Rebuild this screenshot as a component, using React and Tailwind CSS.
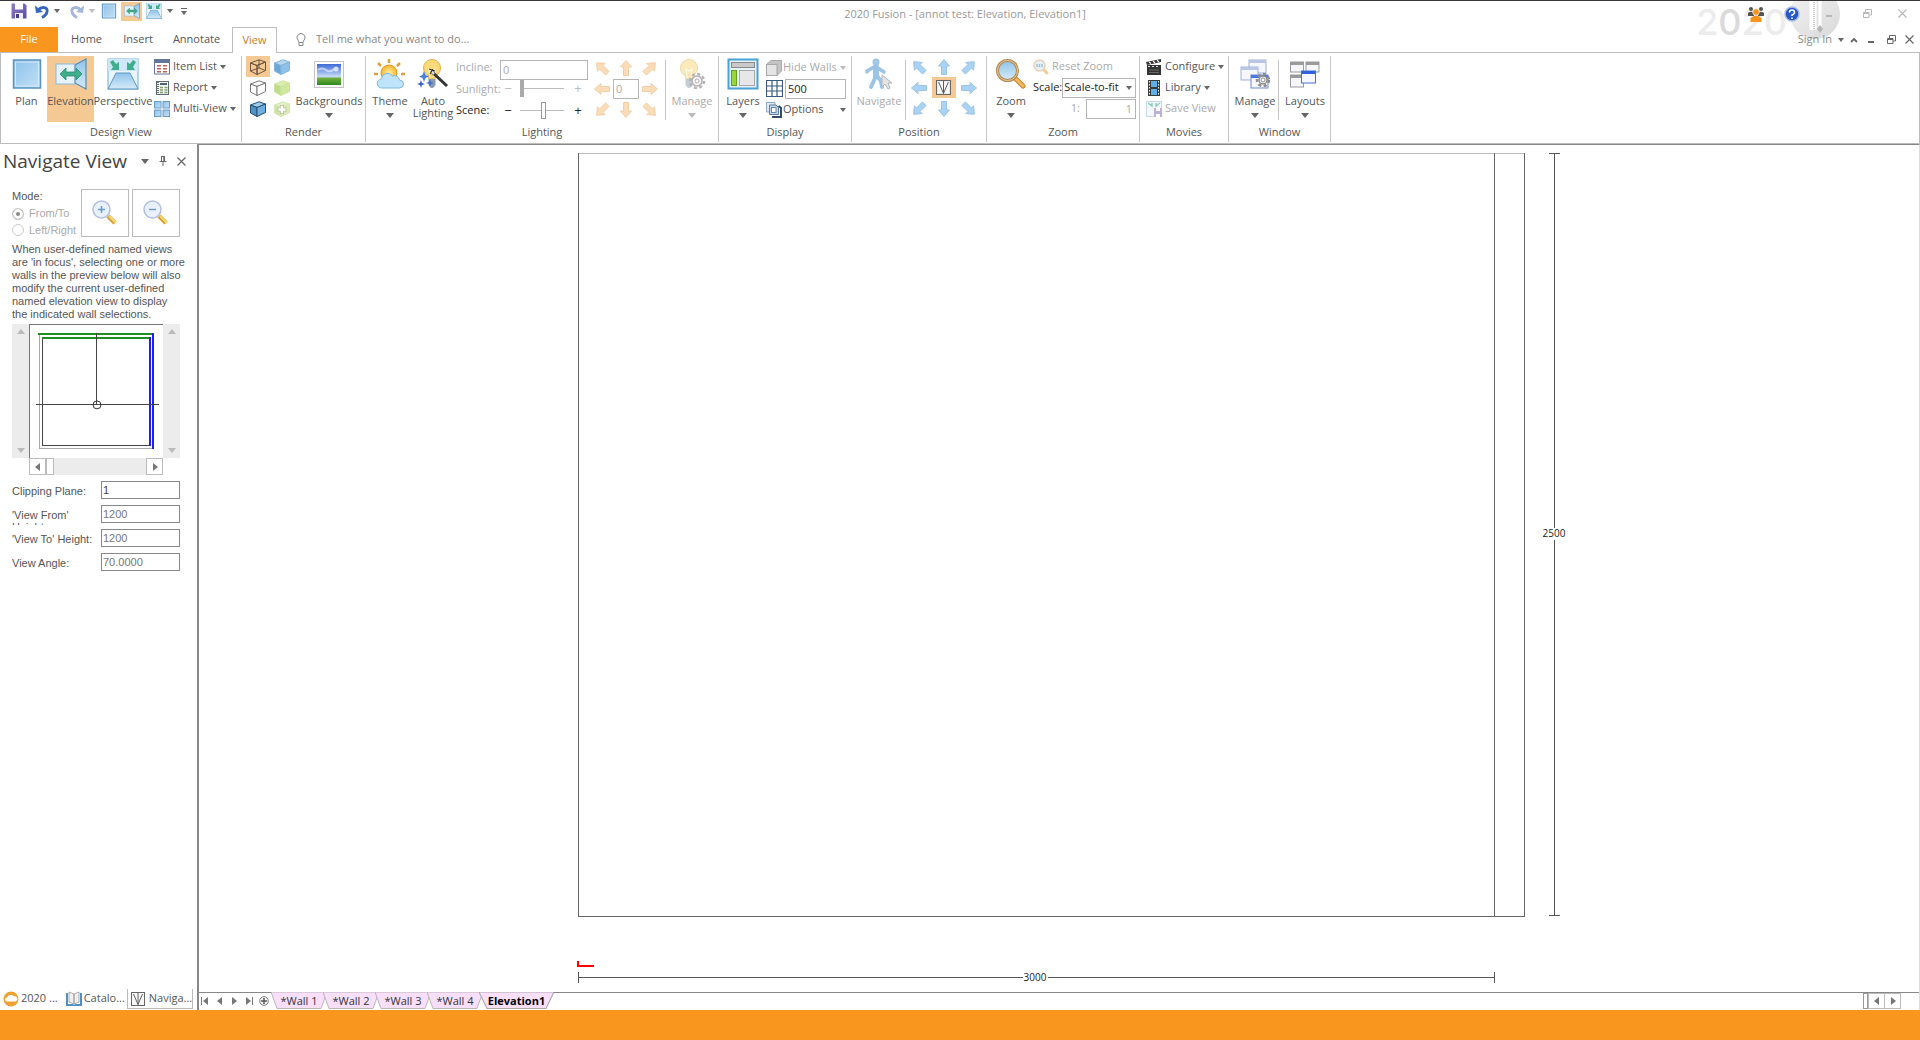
import React from 'react';

/* ---------- small glyphs ---------- */

function Caret({ className = 'text-[#666]' }) {
  return (
    <svg viewBox="0 0 6 4" className={`h-1 w-1.5 shrink-0 ${className}`} fill="currentColor">
      <path d="M0 0H6L3 4Z" />
    </svg>
  );
}

function BigCaret({ className = 'text-[#666]' }) {
  return (
    <svg viewBox="0 0 8 5" className={`h-[5px] w-2 shrink-0 ${className}`} fill="currentColor">
      <path d="M0 0H8L4 5Z" />
    </svg>
  );
}

function Tri({ angle, className = 'size-2 text-[#777]' }) {
  return (
    <svg viewBox="0 0 8 8" className={className} fill="currentColor">
      <path d="M0 6H8L4 1Z" transform={`rotate(${angle} 4 4)`} />
    </svg>
  );
}

function Arrow({ angle, fill = '#a9d3f2', stroke = '#8dbbe0' }) {
  return (
    <svg viewBox="0 0 16 16" className="size-4">
      <path
        d="M8 .5L13.500 7H10.500V15.500H5.500V7H2.500Z"
        fill={fill}
        stroke={stroke}
        strokeWidth=".8"
        strokeLinejoin="round"
        transform={`rotate(${angle} 8 8)`}
      />
    </svg>
  );
}

function Gradients() {
  return (
    <svg className="absolute size-0" aria-hidden="true">
      <defs>
        <linearGradient id="sky" x1="0" y1="0" x2="0" y2="1">
          <stop offset="0" stopColor="#8fc3ea" />
          <stop offset="1" stopColor="#d6ebf9" />
        </linearGradient>
        <linearGradient id="skyDiag" x1="0" y1="0" x2="1" y2="1">
          <stop offset="0" stopColor="#8cc1ea" />
          <stop offset="1" stopColor="#c4e1f6" />
        </linearGradient>
        <linearGradient id="photo" x1="0" y1="0" x2="0" y2="1">
          <stop offset="0" stopColor="#3d68d6" />
          <stop offset=".6" stopColor="#c5dcf8" />
          <stop offset=".68" stopColor="#6fae3c" />
          <stop offset="1" stopColor="#2f8a1f" />
        </linearGradient>
        <radialGradient id="sun">
          <stop offset="0" stopColor="#fff0a8" />
          <stop offset="1" stopColor="#f7b52c" />
        </radialGradient>
        <linearGradient id="purple" x1="0" y1="0" x2="1" y2="1">
          <stop offset="0" stopColor="#8f7fc6" />
          <stop offset="1" stopColor="#5b4b9e" />
        </linearGradient>
        <linearGradient id="disc" x1="0" y1="0" x2="1" y2="1">
          <stop offset="0" stopColor="#f3f3f3" />
          <stop offset="1" stopColor="#d8d8d8" />
        </linearGradient>
      </defs>
    </svg>
  );
}

/* ---------- view icons ---------- */

function PlanIcon({ className, line = '#5a93be' }) {
  return (
    <svg viewBox="0 0 32 32" className={className}>
      <rect x="2.500" y="2" width="27" height="28" fill="url(#skyDiag)" stroke={line} strokeWidth="1.500" />
      <rect x="4.500" y="4" width="23" height="24" fill="none" stroke="#d4eafa" />
    </svg>
  );
}

function ElevationIcon({ className }) {
  return (
    <svg viewBox="0 0 32 32" className={className}>
      <rect x="1" y="6" width="20" height="20" fill="#e6f3fc" stroke="#8ab9dc" />
      <path d="M20 7L31 1V31L20 25Z" fill="url(#sky)" stroke="#4f8fc0" strokeWidth="1.200" />
      <path d="M5 16L11 10V14H21V10L27 16L21 22V18H11V22Z" fill="#3fae8c" stroke="#2a8d6e" strokeWidth=".8" />
    </svg>
  );
}

function PerspectiveIcon({ className }) {
  return (
    <svg viewBox="0 0 32 32" className={className}>
      <rect x="1" y="1" width="30" height="30" fill="#eaf5fd" stroke="#6fadd8" />
      <path d="M1 1H31V13H1Z" fill="#cfe7f9" />
      <path d="M9 15H23L31 31H1Z" fill="url(#sky)" stroke="#5f96c0" />
      <path d="M3 4L6 2L9 6L12 4V12H4L6 9Z" fill="#3fae8c" />
      <path d="M29 4L26 2L23 6L20 4V12H28L26 9Z" fill="#3fae8c" />
    </svg>
  );
}

function ItemListIcon() {
  return (
    <svg viewBox="0 0 16 16" className="size-4 shrink-0">
      <rect x=".5" y="1" width="15" height="14" fill="#fff" stroke="#66799a" />
      <rect x="0" y="0" width="16" height="4" fill="#62779c" />
      <path d="M3 6h4v1.5H3zM9 6h4v1.5H9zM3 9h4v1.5H3zM9 9h4v1.5H9zM3 12h4v1.5H3zM9 12h4v1.5H9z" fill="#b9654f" />
    </svg>
  );
}

function ReportIcon() {
  return (
    <svg viewBox="0 0 16 16" className="size-4 shrink-0">
      <rect x="2.500" y="1.500" width="12" height="13" fill="#f6f8f4" stroke="#5d6a72" />
      <path d="M4 2v12" stroke="#3c474d" strokeWidth="1.500" strokeDasharray="1 1" />
      <rect x="6" y="3" width="7" height="2" fill="#4d6270" />
      <path d="M6 7.500h3M6 10h3M6 12.500h3M10.500 7.500h3M10.500 10h3M10.500 12.500h3" stroke="#7fa06e" strokeWidth="1.300" />
    </svg>
  );
}

function MultiViewIcon() {
  return (
    <svg viewBox="0 0 16 16" className="size-4 shrink-0">
      <g fill="url(#skyDiag)" stroke="#6c9cc2">
        <rect x=".5" y=".5" width="6.500" height="6.500" />
        <rect x="9" y=".5" width="6.500" height="6.500" />
        <rect x=".5" y="9" width="6.500" height="6.500" />
        <rect x="9" y="9" width="6.500" height="6.500" />
      </g>
    </svg>
  );
}

/* ---------- render icons ---------- */

function Cube({ top, left, right, line, wire, plus }) {
  return (
    <svg viewBox="0 0 18 16" className="h-4 w-[18px]">
      <g stroke={line} strokeWidth="1" strokeLinejoin="round">
        <path d="M1.500 4L10 .8L16.500 3L8 6.500Z" fill={top} />
        <path d="M1.500 4L8 6.500V15.500L1.500 12Z" fill={left} />
        <path d="M8 6.500L16.500 3V11.500L8 15.500Z" fill={right} />
        {wire && <path d="M10 .8V9L1.500 12M10 9L16.500 11.500" fill="none" />}
      </g>
      {plus && <path d="M9 4V13M4.500 8.500H13.500" stroke="#b4bf9a" strokeWidth="4" />}
      {plus && <path d="M9 4.800V12.200M5.300 8.500H12.700" stroke="#fff" strokeWidth="2.500" />}
    </svg>
  );
}

const cubes = [
  { name: 'Wireframe', top: 'none', left: 'none', right: 'none', line: '#6b5540', wire: true, active: true },
  { name: 'Shaded', top: '#b5d8f2', left: '#6ba6d8', right: '#8fc0e8', line: '#82b4dc' },
  { name: 'Hidden line', top: '#fff', left: '#fff', right: '#fff', line: '#777' },
  { name: 'Textured', top: '#dcefb0', left: '#bedd84', right: '#cfe89c', line: '#cfe3a4' },
  { name: 'Outlined', top: '#9fcbec', left: '#4f91c6', right: '#6faede', line: '#27506f' },
  { name: 'Advanced', top: '#e2f0c4', left: '#cde6a4', right: '#d8ecb4', line: '#d3e6b4', plus: true },
];

function BackgroundsIcon() {
  return (
    <svg viewBox="0 0 32 30" className="h-[30px] w-8">
      <rect x="1.500" y="2.500" width="29" height="26" fill="#fdfdfd" stroke="#c4c4c4" />
      <rect x="4" y="5" width="24" height="21" fill="url(#photo)" />
      <path d="M5 11q4-3 8 0t8-1" stroke="#dfeaff" strokeWidth="2" fill="none" opacity=".7" />
      <circle cx="23" cy="10" r="2.500" fill="#fff" opacity=".7" />
    </svg>
  );
}

/* ---------- lighting icons ---------- */

function ThemeIcon() {
  return (
    <svg viewBox="0 0 32 30" className="h-[30px] w-8">
      <g stroke="#e0a040" strokeWidth="2.500">
        <path d="M15 0V4M4 4L7 7M26 4L23 7M0 15H4M27 15H31" />
      </g>
      <circle cx="15" cy="14" r="8" fill="url(#sun)" stroke="#e29a24" />
      <path
        d="M8 29a4.500 4.500 0 01-.5-9 6 6 0 0111-3 5 5 0 017 4 4 4 0 010 8Z"
        fill="#bfe3f8"
        stroke="#7fb9de"
      />
    </svg>
  );
}

function Bulb({ faded }) {
  return (
    <g opacity={faded ? 0.5 : 1}>
      <circle cx="13" cy="9" r="8.500" fill="#fbd978" stroke="#e5b04a" />
      <path d="M9 16H17L16 20H10Z" fill="#fbd978" stroke="#e5b04a" />
      <path d="M11 18L10 10L13 12L16 10L15 18" fill="none" stroke="#fff6d8" strokeWidth="1.200" />
      <path d="M9.500 20H16.500V26L14 29H12L9.500 26Z" fill="#8b9bb0" />
    </g>
  );
}

function AutoLightingIcon() {
  return (
    <svg viewBox="0 0 32 30" className="h-[30px] w-8">
      <g transform="translate(2 0)"><Bulb /></g>
      <path d="M14 12L30 27" stroke="#333" strokeWidth="3" />
      <path d="M14 12L17 15" stroke="#e4e4e4" strokeWidth="2" />
      <path d="M12 10L18 12M13 15L16 10" stroke="#222" strokeWidth="1" />
      <path d="M7 12L8.500 16L12 17.500L8.500 19L7 23L5.500 19L2 17.500L5.500 16Z" fill="#4a7fd8" />
      <path d="M4 21L5 24L8 25L5 26L4 29L3 26L0 25L3 24Z" fill="#2f5fc4" />
      <path d="M13 20L14 23L17 24L14 25L13 28L12 25L9 24L12 23Z" fill="#3f70d0" />
    </svg>
  );
}

function Gear({ cx, cy, color, r = 5 }) {
  return (
    <g>
      <circle cx={cx} cy={cy} r={r + 2} fill="none" stroke={color} strokeWidth="2.500" strokeDasharray="3 2.500" />
      <circle cx={cx} cy={cy} r={r} fill="#f4f4f4" stroke={color} strokeWidth="1.500" />
      <circle cx={cx} cy={cy} r="2" fill="#fff" stroke={color} />
    </g>
  );
}

function LightManageIcon() {
  return (
    <svg viewBox="0 0 32 30" className="h-[30px] w-8">
      <Bulb faded />
      <Gear cx={21} cy={22} color="#b3b3b3" />
    </svg>
  );
}

/* ---------- display, position, zoom icons ---------- */

function LayersIcon() {
  return (
    <svg viewBox="0 0 32 32" className="size-8">
      <rect x="1.500" y="1.500" width="29" height="29" fill="#e6f2fa" stroke="#4ba3d4" strokeWidth="2" />
      <rect x="4.500" y="4.500" width="23" height="5" fill="#c9c9c9" stroke="#8a8a8a" />
      <rect x="4.500" y="12.500" width="5" height="15" fill="#96d83c" stroke="#5fa01c" />
      <rect x="12.500" y="12.500" width="15" height="15" fill="#e7e7ea" stroke="#a9a9a9" />
    </svg>
  );
}

function HideWallsIcon() {
  return (
    <svg viewBox="0 0 16 16" className="size-4 shrink-0">
      <path d="M5 .5H15.500V11L11 15.500V4.500H.5Z" fill="#c4c4c4" stroke="#a8a8a8" />
      <rect x=".5" y="4.500" width="10.500" height="11" fill="#e4e4e4" stroke="#a8a8a8" />
    </svg>
  );
}

function GridIcon() {
  return (
    <svg viewBox="0 0 17 17" className="size-[17px] shrink-0">
      <path d="M.5.5H16.500V16.500H.5ZM6 0V17M11 0V17M0 6H17M0 11H17" fill="#fff" stroke="#3d5a80" strokeWidth="1.200" />
    </svg>
  );
}

function OptionsIcon() {
  return (
    <svg viewBox="0 0 16 16" className="size-4 shrink-0">
      <path d="M.5.5H9V10H.5Z" fill="#dfe9f3" stroke="#8fa6bf" />
      <path d="M3.500 3H10L12.500 5.500V12.500H3.500Z" fill="#c3d6ea" stroke="#5d7a9c" />
      <path d="M6 15H15V6L12.500 4" fill="none" stroke="#2f4c70" strokeWidth="2" />
      <rect x="5.500" y="5.500" width="4.500" height="5" fill="#fff" stroke="#6d87a5" />
    </svg>
  );
}

function NavigateIcon() {
  return (
    <svg viewBox="0 0 30 32" className="h-8 w-[30px]">
      <g fill="none" stroke="#9cc4e4" strokeLinecap="round" strokeLinejoin="round">
        <circle cx="12" cy="4" r="2.500" fill="#a9cdea" strokeWidth="2" />
        <path d="M12 9V18" strokeWidth="6" />
        <path d="M10 9L3 13V14M14 10L20 14" strokeWidth="3.500" />
        <path d="M12 18L7 29M13 18L17 23L18 29" strokeWidth="4" />
      </g>
      <path d="M18 17V29L21 26L24 31L26 30L24 25H28Z" fill="#e4e4e4" stroke="#b5b5b5" />
    </svg>
  );
}

function CompassIcon({ className = 'size-[15px]' }) {
  return (
    <svg viewBox="0 0 14 14" className={className}>
      <rect x=".5" y=".5" width="13" height="13" fill="#f7f7f7" stroke="#666" />
      <path d="M7 1V12.500M2.500 2L7 12.500L11.500 2" fill="none" stroke="#555" strokeWidth=".9" />
    </svg>
  );
}

function ZoomIcon() {
  return (
    <svg viewBox="0 0 32 32" className="size-8">
      <path d="M19 19L28 28" stroke="#c8842c" strokeWidth="5" strokeLinecap="round" />
      <path d="M20 20L28 28" stroke="#f4b860" strokeWidth="3" strokeLinecap="round" />
      <circle cx="12.500" cy="12.500" r="10" fill="url(#sky)" stroke="#b08850" strokeWidth="3" />
      <circle cx="12.500" cy="12.500" r="10" fill="none" stroke="#e8cfa0" strokeWidth="1" />
    </svg>
  );
}

function ResetZoomIcon() {
  return (
    <svg viewBox="0 0 16 16" className="size-4 shrink-0" opacity=".65">
      <path d="M10 10L14 14" stroke="#f0b060" strokeWidth="3" strokeLinecap="round" />
      <circle cx="6.500" cy="6.500" r="5.500" fill="#d6e9f7" stroke="#e0be8c" strokeWidth="1.500" />
      <path d="M4 5V8M6.500 5V8M9 5V8" stroke="#5f9ac8" strokeWidth="1.300" />
    </svg>
  );
}

function PanelZoomIcon({ minus }) {
  return (
    <svg viewBox="0 0 28 28" className="size-7">
      <path d="M17 17L24 24" stroke="#d6a032" strokeWidth="4.500" />
      <path d="M18 17L25 24" stroke="#f8da74" strokeWidth="2" />
      <circle cx="10.500" cy="10.500" r="8.500" fill="#e9f2fc" stroke="#b3bfe0" strokeWidth="1.500" />
      <path d={minus ? 'M7 10.500H14' : 'M7 10.500H14M10.500 7V14'} stroke="#6d9cc8" strokeWidth="1.500" />
    </svg>
  );
}

/* ---------- movies and window icons ---------- */

function ClapperIcon() {
  return (
    <svg viewBox="0 0 16 16" className="size-4 shrink-0">
      <rect x="1" y="6" width="14" height="10" fill="#333" />
      <path d="M0 3L15 0V3L1 6Z" fill="#333" />
      <path d="M3 3L5 4.500M7 2L9 3.700M11 1.300L13 3" stroke="#fff" strokeWidth="1.200" />
      <path d="M2 7.500H14" stroke="#ddd" strokeWidth="1" strokeDasharray="2 2" />
      <path d="M3 11H13M3 13.500H13" stroke="#777" strokeWidth=".8" />
    </svg>
  );
}

function FilmIcon() {
  return (
    <svg viewBox="0 0 16 16" className="size-4 shrink-0">
      <rect x="2" y="0" width="12" height="16" fill="#3b3b3b" />
      <rect x="5" y="1" width="6" height="6" fill="#5db0ea" />
      <rect x="5" y="9" width="6" height="6" fill="#5db0ea" />
      <path d="M3.500 1V16M12.500 1V16" stroke="#fff" strokeWidth="1" strokeDasharray="1.500 1.500" />
    </svg>
  );
}

function SaveViewIcon() {
  return (
    <svg viewBox="0 0 16 16" className="size-4 shrink-0" opacity=".6">
      <rect x=".5" y=".5" width="15" height="15" fill="#eaf4fb" stroke="#9cc3de" />
      <path d="M2 2L6 5V2M14 2L10 5V2" stroke="#3fae8c" strokeWidth="1.500" fill="none" />
      <rect x="8" y="7" width="8" height="9" fill="#8f7fc6" />
      <path d="M10 7H14V10H10ZM10 13H14V16H10Z" fill="#fff" />
    </svg>
  );
}

function MiniWindow({ x, y, w, h, bar, line }) {
  return (
    <g>
      <rect x={x} y={y} width={w} height={h} fill="#f5f7fc" stroke={line} />
      <rect x={x} y={y} width={w} height="3" fill={bar} />
    </g>
  );
}

function WindowManageIcon() {
  return (
    <svg viewBox="0 0 32 32" className="size-8">
      <MiniWindow x={10} y={2} w={17} h={13} bar="#b9c6e4" line="#9fb0d4" />
      <MiniWindow x={2} y={9} w={17} h={13} bar="#b9c6e4" line="#9fb0d4" />
      <MiniWindow x={12} y={17} w={17} h={13} bar="#4a7ae0" line="#6c8cd4" />
      <Gear cx={24} cy={22} color="#8d8d8d" r={4} />
    </svg>
  );
}

function LayoutsIcon() {
  return (
    <svg viewBox="0 0 32 32" className="size-8">
      <MiniWindow x={1.5} y={4} w={13} h={10} bar="#9a9a9a" line="#9a9a9a" />
      <MiniWindow x={17} y={4} w={13} h={10} bar="#9a9a9a" line="#9a9a9a" />
      <MiniWindow x={1.5} y={17} w={13} h={12} bar="#9a9a9a" line="#9a9a9a" />
      <MiniWindow x={12.5} y={13} w={14} h={12} bar="#2f62dc" line="#4a72cc" />
    </svg>
  );
}

/* ---------- title bar icons ---------- */

function SaveIcon() {
  return (
    <svg viewBox="0 0 16 16" className="size-4">
      <path d="M.5.5H13.500L15.500 2.500V15.500H.5Z" fill="url(#purple)" />
      <rect x="4" y="0" width="8" height="6.500" fill="#fff" />
      <rect x="4" y="10" width="8" height="6" fill="#efeefa" />
      <rect x="5" y="11" width="3" height="4" fill="#4a3a86" />
    </svg>
  );
}

function UndoIcon({ flip }) {
  return (
    <svg viewBox="0 0 14 15" className="h-[15px] w-3.5">
      <g transform={flip ? 'translate(14 0) scale(-1 1)' : undefined}>
        <path d="M3 6C7 2 13 3 12 8C11.500 11 9 12.500 7 13.500" fill="none" stroke={flip ? '#a4b6dc' : '#3565bd'} strokeWidth="2.800" />
        <path d="M0 1.500L1 9L8 8Z" fill={flip ? '#a4b6dc' : '#3565bd'} />
      </g>
    </svg>
  );
}

function PeopleIcon() {
  return (
    <svg viewBox="0 0 16 16" className="size-4">
      <g fill="#555">
        <circle cx="3" cy="3" r="2" />
        <circle cx="13" cy="3" r="2" />
        <path d="M0 10V7Q3 4.500 6 7V10ZM10 10V7Q13 4.500 16 7V10Z" />
      </g>
      <circle cx="8" cy="6" r="3.300" fill="#f7941d" stroke="#fff" strokeWidth=".6" />
      <path d="M2.500 16V12Q8 7 13.500 12V16Z" fill="#f7941d" />
    </svg>
  );
}

function HelpIcon() {
  return (
    <svg viewBox="0 0 16 16" className="size-4">
      <circle cx="8" cy="8" r="7" fill="#2558c8" stroke="#a9bde4" strokeWidth="1.500" />
      <path d="M5.500 6.500Q5.500 4 8 4T10.500 6.500Q10.500 8 8 9V10M8 11.500V13" fill="none" stroke="#fff" strokeWidth="1.600" />
    </svg>
  );
}

function RestoreIcon() {
  return (
    <svg viewBox="0 0 9 9" className="size-[9px]" fill="none" stroke="currentColor">
      <path d="M.5 3.500H6V8.500H.5ZM2.500 3V.5H8.500V6H6.500M.5 4.500H6" />
    </svg>
  );
}

function CloseIcon() {
  return (
    <svg viewBox="0 0 9 9" className="size-[9px]" fill="none" stroke="currentColor" strokeWidth="1.200">
      <path d="M.5.5L8.500 8.500M8.500.5L.5 8.500" />
    </svg>
  );
}

function MinimizeIcon() {
  return (
    <svg viewBox="0 0 8 9" className="h-[9px] w-2" fill="none" stroke="currentColor" strokeWidth="2">
      <path d="M1 7H7" />
    </svg>
  );
}

/* ---------- ribbon building blocks ---------- */

function Group({ label, className, children }) {
  return (
    <section className={`flex shrink-0 flex-col border-r border-[#c6c6c6] ${className}`}>
      <div className="flex h-[66px]">{children}</div>
      <h2 className="h-5 text-center leading-5">{label}</h2>
    </section>
  );
}

function BigButton({ label, icon, caret, active, disabled, className }) {
  return (
    <button
      type="button"
      disabled={disabled}
      className={`flex shrink-0 flex-col items-center pt-0.5 ${active ? 'bg-[#f5c993]' : ''} ${disabled ? 'text-[#aaa]' : ''} ${className}`}
    >
      <span className="flex h-8 items-center">{icon}</span>
      <span className="mt-[5px] text-center leading-3 whitespace-nowrap">{label}</span>
      {caret && <BigCaret className={disabled ? 'mt-1.5 text-[#bbb]' : 'mt-1.5 text-[#666]'} />}
    </button>
  );
}

function RowButton({ label, icon, caret, disabled, spread }) {
  return (
    <button
      type="button"
      disabled={disabled}
      className={`flex h-[21px] items-center whitespace-nowrap ${spread ? 'gap-px' : 'gap-[3px]'} ${disabled ? 'text-[#aaa]' : ''}`}
    >
      {icon}
      <span className={spread ? 'flex-1 text-left' : ''}>{label}</span>
      {caret && <Caret className={disabled ? 'text-[#bbb]' : 'text-[#666]'} />}
    </button>
  );
}

function Divider() {
  return <span className="mt-1 h-[60px] w-px shrink-0 bg-[#c6c6c6]" />;
}

const compass = [
  ['North west', -45], ['North', 0], ['North east', 45],
  ['West', -90], null, ['East', 90],
  ['South west', -135], ['South', 180], ['South east', 135],
];

function ArrowPad({ fill, stroke, center, disabled, className }) {
  return (
    <div className={`grid grid-cols-3 grid-rows-3 place-items-center ${className}`}>
      {compass.map((c) =>
        c ? (
          <button key={c[0]} type="button" aria-label={c[0]} disabled={disabled}>
            <Arrow angle={c[1]} fill={fill} stroke={stroke} />
          </button>
        ) : (
          <React.Fragment key="center">{center}</React.Fragment>
        ),
      )}
    </div>
  );
}

/* ---------- header ---------- */

function TitleBar() {
  return (
    <header className="relative flex h-[27px] items-start justify-between border-t border-[#3a3538]">
      <div className="flex h-5 items-center pl-[11px]">
        <button type="button" aria-label="Save"><SaveIcon /></button>
        <button type="button" aria-label="Undo" className="ml-2 flex items-center gap-[5px]">
          <UndoIcon /><Caret />
        </button>
        <button type="button" aria-label="Redo" className="ml-2.5 flex items-center gap-[5px]">
          <UndoIcon flip /><Caret className="text-[#bbb]" />
        </button>
        <button type="button" aria-label="Plan" className="ml-1.5"><PlanIcon className="size-4" line="#3f7fb0" /></button>
        <button type="button" aria-label="Elevation" className="ml-1 grid h-[19px] w-[21px] place-items-center bg-[#f5c993]">
          <ElevationIcon className="size-4" />
        </button>
        <button type="button" aria-label="Perspective" className="ml-1 flex items-center gap-[5px]">
          <PerspectiveIcon className="size-4" /><Caret />
        </button>
        <button type="button" aria-label="Customize" className="ml-2 flex flex-col items-center gap-0.5">
          <span className="h-px w-1.5 bg-[#666]" />
          <Caret />
        </button>
      </div>

      <h1 className="absolute inset-x-0 top-1 text-center leading-[18px] text-[#999]">
        <span className="ml-2.5">2020 Fusion - [annot test: Elevation, Elevation1]</span>
      </h1>

      <div
        className="absolute top-0 right-[133px] font-['Inter',sans-serif] text-[36px] leading-[42px] font-medium text-[#ececec]"
        aria-hidden="true"
      >
        2<span className="text-[#dadada]">0</span>20
      </div>
      <svg viewBox="0 0 60 40" className="absolute top-0 right-[75px] h-10 w-[60px]">
        <circle cx="30" cy="13" r="25" fill="url(#disc)" />
        <path d="M28 0V29" stroke="#fff" strokeWidth="7" />
        <path d="M29 1V29" stroke="#ccc" strokeWidth="2" strokeDasharray="1 1" />
        <path d="M35 0V26" stroke="#fff" strokeWidth="3" />
        <path d="M35 24L38 28L35 32L32 28Z" fill="#b5b5b5" />
      </svg>
      <div className="relative flex h-[25px] items-center pr-[13px] text-[#b8b8b8]">
        <button type="button" aria-label="Community"><PeopleIcon /></button>
        <button type="button" aria-label="Help" className="ml-5"><HelpIcon /></button>
        <button type="button" aria-label="Minimize" className="ml-[25px]"><MinimizeIcon /></button>
        <button type="button" aria-label="Restore" className="ml-[30px]"><RestoreIcon /></button>
        <button type="button" aria-label="Close" className="ml-[26px]"><CloseIcon /></button>
      </div>
    </header>
  );
}

function TabStrip() {
  return (
    <nav className="relative flex h-[26px] items-stretch border-b border-[#bdbdbd]">
      <button type="button" className="w-[58px] bg-[#f8961e] text-white">File</button>
      <button type="button" className="w-[57px]">Home</button>
      <button type="button" className="w-[46px]">Insert</button>
      <button type="button" className="w-[71px]">Annotate</button>
      <button type="button" className="-mb-px h-[26px] w-[45px] border border-b-0 border-[#bdbdbd] bg-white text-[#c97b28]">View</button>
      <label className="ml-[19px] flex items-center gap-2.5 text-[#888]">
        <svg viewBox="0 0 10 14" className="h-3.5 w-2.5" fill="none" stroke="#888">
          <path d="M3 9.500Q3 8 1.700 6.800A4 4 0 118.300 6.800Q7 8 7 9.500ZM3 9.500V12.500H7V9.500" />
        </svg>
        <input
          type="text"
          placeholder="Tell me what you want to do..."
          className="w-[180px] outline-none placeholder:text-[#888]"
        />
      </label>
      <div className="ml-auto flex items-center pr-1.5 text-[#666]">
        <button type="button" className="flex items-center gap-1.5 text-[#888]">Sign In <Caret /></button>
        <button type="button" aria-label="Collapse ribbon" className="ml-1.5">
          <svg viewBox="0 0 8 6" className="h-1.5 w-2" fill="none" stroke="currentColor" strokeWidth="1.800">
            <path d="M1 5L4 2L7 5" />
          </svg>
        </button>
        <button type="button" aria-label="Minimize view" className="ml-[9px]"><MinimizeIcon /></button>
        <button type="button" aria-label="Restore view" className="ml-3"><RestoreIcon /></button>
        <button type="button" aria-label="Close view" className="ml-[9px]"><CloseIcon /></button>
      </div>
    </nav>
  );
}

function LightSlider({ label, disabled, value, thumb }) {
  return (
    <div className={`flex h-[21px] items-center ${disabled ? 'text-[#bbb]' : 'text-[#222]'}`}>
      <span className="w-4 text-center text-[13px]">−</span>
      <input
        type="range"
        aria-label={label}
        disabled={disabled}
        defaultValue={value}
        className={`mx-1 h-[17px] w-[44px] appearance-none bg-[linear-gradient(#bbb,#bbb)] bg-[length:100%_1px] bg-center bg-no-repeat ${thumb}`}
      />
      <span className="w-5 text-center text-[13px]">+</span>
    </div>
  );
}

function Ribbon() {
  return (
    <div className="flex border-x border-b border-[#bdbdbd] pt-[3px] pb-px">
      <Group label="Design View" className="w-[241px]">
        <BigButton label="Plan" icon={<PlanIcon className="size-8" />} className="ml-[5px] w-[41px]" />
        <BigButton label="Elevation" icon={<ElevationIcon className="size-8" />} active className="w-[47px]" />
        <BigButton label="Perspective" icon={<PerspectiveIcon className="size-8" />} caret className="w-[58px]" />
        <div className="ml-0.5 flex flex-col">
          <RowButton label="Item List" icon={<ItemListIcon />} caret />
          <RowButton label="Report" icon={<ReportIcon />} caret />
          <RowButton label="Multi-View" icon={<MultiViewIcon />} caret />
        </div>
      </Group>

      <Group label="Render" className="w-[124px]">
        <div className="ml-1 grid h-[63px] grid-cols-2">
          {cubes.map(({ name, active, ...cube }) => (
            <button
              key={name}
              type="button"
              aria-label={name}
              className={`grid w-6 place-items-center ${active ? 'bg-[#f5c993]' : ''}`}
            >
              <Cube {...cube} />
            </button>
          ))}
        </div>
        <BigButton label="Backgrounds" icon={<BackgroundsIcon />} caret className="ml-0.5 w-[66px]" />
      </Group>

      <Group label="Lighting" className="w-[353px]">
        <BigButton label="Theme" icon={<ThemeIcon />} caret className="ml-1 w-[40px]" />
        <BigButton label={<>Auto<br />Lighting</>} icon={<AutoLightingIcon />} className="ml-0.5 w-[42px]" />
        <div className="mt-px ml-0.5 grid h-[64px] grid-cols-[44px_88px] grid-rows-3 items-center">
          <label htmlFor="incline" className="text-[#aaa]">Incline:</label>
          <input id="incline" type="text" disabled defaultValue="0" className="mt-1 h-5 w-full border border-[#b5b5b5] px-0.5 text-[#aaa]" />
          <span className="text-[#aaa]">Sunlight:</span>
          <LightSlider
            label="Sunlight"
            disabled
            value={0}
            thumb="[&::-webkit-slider-thumb]:h-[17px] [&::-webkit-slider-thumb]:w-1 [&::-webkit-slider-thumb]:appearance-none [&::-webkit-slider-thumb]:bg-[#aaa]"
          />
          <span className="text-[#222]">Scene:</span>
          <LightSlider
            label="Scene"
            value={54}
            thumb="[&::-webkit-slider-thumb]:h-[17px] [&::-webkit-slider-thumb]:w-[5px] [&::-webkit-slider-thumb]:appearance-none [&::-webkit-slider-thumb]:border [&::-webkit-slider-thumb]:border-[#999] [&::-webkit-slider-thumb]:bg-white"
          />
        </div>
        <ArrowPad
          className="mt-px ml-0.5 h-[64px] w-[72px]"
          fill="#fbdcb8"
          stroke="#eec79c"
          disabled
          center={<input type="text" aria-label="Angle" disabled defaultValue="0" className="h-5 w-[26px] border border-[#b5b5b5] px-0.5 text-[#aaa]" />}
        />
        <span className="w-[3px]" />
        <Divider />
        <BigButton label="Manage" icon={<LightManageIcon />} caret disabled className="ml-1 w-[44px]" />
      </Group>

      <Group label="Display" className="w-[133px]">
        <BigButton label="Layers" icon={<LayersIcon />} caret className="ml-[3px] w-[42px]" />
        <div className="mt-px ml-0.5 flex w-[80px] flex-col">
          <RowButton label="Hide Walls" icon={<HideWallsIcon />} caret disabled spread />
          <label className="flex h-[21px] items-center gap-0.5">
            <GridIcon />
            <input type="text" aria-label="Grid spacing" defaultValue="500" className="h-5 w-[61px] border border-[#b5b5b5] px-0.5 text-[#222]" />
          </label>
          <RowButton label="Options" icon={<OptionsIcon />} caret spread />
        </div>
      </Group>

      <Group label="Position" className="w-[135px]">
        <BigButton label="Navigate" icon={<NavigateIcon />} disabled className="ml-1 w-[46px]" />
        <span className="w-[3px]" />
        <Divider />
        <ArrowPad
          className="ml-px h-[63px] w-[74px]"
          center={
            <button type="button" aria-label="Center" className="grid h-[21px] w-6 place-items-center bg-[#f5c993]">
              <CompassIcon />
            </button>
          }
        />
      </Group>

      <Group label="Zoom" className="w-[153px]">
        <BigButton label="Zoom" icon={<ZoomIcon />} caret className="ml-1 w-[40px]" />
        <div className="ml-0.5 flex w-[103px] flex-col">
          <RowButton label="Reset Zoom" icon={<ResetZoomIcon />} disabled />
          <label className="flex h-[21px] items-center justify-between text-[#222]">
            Scale:
            <span className="relative">
              <select className="h-5 w-[74px] appearance-none border border-[#b5b5b5] bg-white px-px">
                <option>Scale-to-fit</option>
              </select>
              <Caret className="pointer-events-none absolute top-2 right-1 text-[#666]" />
            </span>
          </label>
          <label className="flex h-[21px] items-center justify-end gap-1.5 text-[#aaa]">
            1:
            <input type="text" disabled defaultValue="1" className="h-5 w-[50px] border border-[#b5b5b5] px-[3px] text-right text-[#aaa]" />
          </label>
        </div>
      </Group>

      <Group label="Movies" className="w-[89px]">
        <div className="ml-1.5 flex flex-col">
          <RowButton label="Configure" icon={<ClapperIcon />} caret />
          <RowButton label="Library" icon={<FilmIcon />} caret />
          <RowButton label="Save View" icon={<SaveViewIcon />} disabled />
        </div>
      </Group>

      <Group label="Window" className="w-[102px]">
        <BigButton label="Manage" icon={<WindowManageIcon />} caret className="ml-[3px] w-[46px]" />
        <Divider />
        <BigButton label="Layouts" icon={<LayoutsIcon />} caret className="ml-1 w-[44px]" />
      </Group>
    </div>
  );
}

/* ---------- navigate panel ---------- */

const fields = [
  { id: 'clip', label: 'Clipping Plane:', value: '1' },
  { id: 'from', label: "'View From' Height:", value: '1200', disabled: true },
  { id: 'to', label: "'View To' Height:", value: '1200', disabled: true },
  { id: 'angle', label: 'View Angle:', value: '70.0000', disabled: true },
];

function VerticalScroll() {
  return (
    <div className="flex w-[17px] flex-col items-center justify-between bg-[#ececec] py-1">
      <Tri angle={0} className="size-2 text-[#bbb]" />
      <Tri angle={180} className="size-2 text-[#bbb]" />
    </div>
  );
}

function NavigatePanel() {
  return (
    <aside className="flex w-[194px] shrink-0 flex-col">
      <div className="flex items-center pt-1 pl-[3px]">
        <h2 className="text-[19px] leading-[26px] text-[#444]">Navigate View</h2>
        <div className="ml-auto flex items-center gap-2.5 pr-2 text-[#666]">
          <button type="button" aria-label="Panel menu"><BigCaret /></button>
          <button type="button" aria-label="Pin">
            <svg viewBox="0 0 8 10" className="h-2.5 w-2" fill="none" stroke="currentColor">
              <path d="M2 .5H6M2.500 .5V5M5.500 .5V5M4.800 .5V5M.5 5.500H7.500M4 6V10" />
            </svg>
          </button>
          <button type="button" aria-label="Close panel"><CloseIcon /></button>
        </div>
      </div>

      <div className="flex flex-col pt-3.5 pr-[14px] pl-3 font-['Liberation_Sans',Arial,sans-serif] text-[11px] text-[#555]">
        <div className="flex justify-between">
          <fieldset>
            <legend className="leading-[17px]">Mode:</legend>
            <label className="flex h-[17px] items-center gap-[5px] text-[#aaa]">
              <input type="radio" name="mode" disabled defaultChecked className="size-3 appearance-none rounded-full border border-[#ccc] checked:bg-[#888] checked:shadow-[inset_0_0_0_3px_white]" />
              From/To
            </label>
            <label className="flex h-4 items-center gap-[5px] text-[#aaa]">
              <input type="radio" name="mode" disabled className="size-3 appearance-none rounded-full border border-[#ccc]" />
              Left/Right
            </label>
          </fieldset>
          <div className="-ml-2 flex gap-[3px] pt-px">
            <button type="button" aria-label="Zoom in" className="grid size-12 place-items-center border border-[#bbb]"><PanelZoomIcon /></button>
            <button type="button" aria-label="Zoom out" className="grid size-12 place-items-center border border-[#bbb]"><PanelZoomIcon minus /></button>
          </div>
        </div>

        <p className="mt-[5px] leading-[13px] whitespace-nowrap">
          When user-defined named views<br />
          are 'in focus', selecting one or more<br />
          walls in the preview below will also<br />
          modify the current user-defined<br />
          named elevation view to display<br />
          the indicated wall selections.
        </p>

        <div className="mt-[3px] flex">
          <VerticalScroll />
          <svg viewBox="0 0 134 134" className="h-[134px] w-[134px] border-t border-l border-[#777]" shapeRendering="crispEdges">
            <path d="M9.500 10V124.500H124" fill="none" stroke="#aaa" />
            <path d="M12.500 14V121.500H120" fill="none" stroke="#444" />
            <path d="M8 9H125M12 13H121" stroke="#1f8f1f" strokeWidth="2" />
            <path d="M124 8V125M121 12V122" stroke="#2020ee" strokeWidth="2" />
            <path d="M67.500 8V80M6 80.500H130" stroke="#444" />
            <circle cx="67.500" cy="80.500" r="4" fill="none" stroke="#333" shapeRendering="auto" />
          </svg>
          <VerticalScroll />
        </div>
        <div className="mx-[17px] flex h-[17px] bg-[#ececec]">
          <button type="button" aria-label="Scroll left" className="grid w-[17px] place-items-center border border-[#bbb] bg-white"><Tri angle={-90} /></button>
          <span className="w-2 border border-[#bbb] bg-white" />
          <button type="button" aria-label="Scroll right" className="ml-auto grid w-[17px] place-items-center border border-[#bbb] bg-white"><Tri angle={90} /></button>
        </div>

        <div className="mt-1.5 flex flex-col gap-1.5">
          {fields.map((f) => (
            <div key={f.id} className="flex h-[18px] justify-between">
              <label htmlFor={f.id} className="h-5 w-[84px] overflow-hidden pt-1 leading-3">{f.label}</label>
              <input
                id={f.id}
                type="text"
                disabled={f.disabled}
                defaultValue={f.value}
                className="w-[79px] border border-[#888] px-px text-[#444] disabled:text-[#777]"
              />
            </div>
          ))}
        </div>
      </div>

      <div className="mt-auto flex h-[21px] items-start pl-[3px] text-[#555]">
        <button type="button" className="flex h-[19px] items-center gap-0.5">
          <svg viewBox="0 0 16 16" className="size-4">
            <circle cx="8" cy="8" r="7.500" fill="#f0a030" />
            <path d="M4 10.500a2 2 0 010-4 4 4 0 017-1 2.500 2.500 0 011.500 5Z" fill="#fff" />
          </svg>
          2020 ...
        </button>
        <button type="button" className="ml-2 flex h-[19px] items-center gap-0.5">
          <svg viewBox="0 0 16 16" className="size-4">
            <path d="M0 2H2V13H7L8 14L9 13H14V2H16V15H0Z" fill="#4f8fc4" />
            <path d="M3 1L8 3V13L3 11ZM13 1L8 3V13L13 11Z" fill="#f0f0f0" stroke="#999" strokeWidth=".8" />
          </svg>
          Catalo...
        </button>
        <button type="button" className="ml-0.5 flex h-5 items-center gap-1 border border-t-0 border-[#bbb] pl-[3px]">
          <CompassIcon className="size-3.5" />
          Naviga...
        </button>
      </div>
    </aside>
  );
}

/* ---------- drawing ---------- */

function Drawing() {
  return (
    <svg viewBox="199 145 1720 847" className="min-h-0 w-full flex-1" shapeRendering="crispEdges">
      <path d="M578 153.500H1525" stroke="#bbb" />
      <path d="M578.500 153V916.500H1524.500V153M1494.500 153V916" fill="none" stroke="#666" />
      <path d="M1549 153.500H1560M1554.500 153V528M1554.500 540V916M1549 915.500H1560" fill="none" stroke="#555" />
      <path d="M578.500 972V983M578 977.500H1023M1048 977.500H1494M1494.500 972V983" fill="none" stroke="#555" />
      <path d="M578 961V966H594" fill="none" stroke="#f00" strokeWidth="2" />
      <g fill="#222" fontSize="10" textAnchor="middle">
        <text x="1554" y="537">2500</text>
        <text x="1035" y="981">3000</text>
      </g>
    </svg>
  );
}

const sheets = [
  { name: '*Wall 1' },
  { name: '*Wall 2' },
  { name: '*Wall 3' },
  { name: '*Wall 4' },
  { name: 'Elevation1', active: true },
];

function SheetTab({ name, active, first }) {
  return (
    <button
      type="button"
      className={`grid h-[17px] place-items-center text-[#333] ${first ? '' : '-ml-1'} ${active ? 'w-[75px] font-bold text-black' : 'w-[56px]'}`}
    >
      <svg viewBox="0 0 56 17" preserveAspectRatio="none" className="h-[17px] w-full [grid-area:1/1]">
        <path d="M0 0H56L50 16.500H6Z" fill="#f9dffa" stroke="#aaa" strokeWidth=".8" />
      </svg>
      <span className="leading-4 whitespace-nowrap [grid-area:1/1]">{name}</span>
    </button>
  );
}

function SheetBar() {
  return (
    <div className="flex h-[18px] items-start border-t border-[#888]">
      <div className="flex h-4 items-center gap-1.5 pl-0.5">
        <button type="button" aria-label="First sheet" className="flex items-center"><span className="h-2 w-px bg-[#777]" /><Tri angle={-90} /></button>
        <button type="button" aria-label="Previous sheet"><Tri angle={-90} /></button>
        <button type="button" aria-label="Next sheet"><Tri angle={90} /></button>
        <button type="button" aria-label="Last sheet" className="flex items-center"><Tri angle={90} /><span className="h-2 w-px bg-[#777]" /></button>
        <button type="button" aria-label="Add sheet">
          <svg viewBox="0 0 10 10" className="size-2.5" fill="none" stroke="#555">
            <circle cx="5" cy="5" r="4.300" strokeWidth=".8" />
            <path d="M5 2V8M2 5H8" strokeWidth="1.500" />
          </svg>
        </button>
      </div>
      <div className="-mt-px ml-0.5 flex">
        {sheets.map((s, i) => (
          <SheetTab key={s.name} first={i === 0} {...s} />
        ))}
      </div>
      <div className="mr-[18px] ml-auto flex h-4">
        <span className="w-[5px] border border-[#999]" />
        <button type="button" aria-label="Scroll left" className="grid w-[17px] place-items-center border border-[#bbb]"><Tri angle={-90} /></button>
        <button type="button" aria-label="Scroll right" className="-ml-px grid w-[17px] place-items-center border border-[#bbb]"><Tri angle={90} /></button>
      </div>
    </div>
  );
}

export default function App() {
  return (
    <div className="flex min-h-screen flex-col bg-white font-['Open_Sans','Noto_Sans',sans-serif] text-[11px] text-[#555]">
      <Gradients />
      <TitleBar />
      <TabStrip />
      <Ribbon />
      <div className="flex flex-1">
        <NavigatePanel />
        <main className="ml-[3px] flex flex-1 flex-col border-t border-r border-l-2 border-t-[#888] border-r-[#ddd] border-l-[#888]">
          <Drawing />
          <SheetBar />
        </main>
      </div>
      <footer className="h-[30px] bg-[#f8961e]" />
    </div>
  );
}
